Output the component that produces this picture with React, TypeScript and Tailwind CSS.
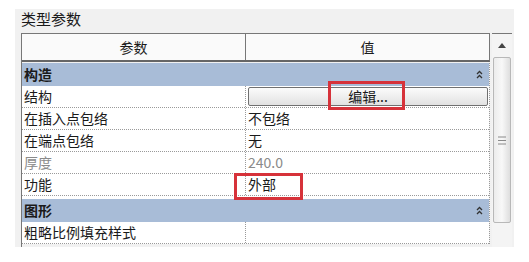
import React from "react";

const font = { fontFamily: '"Noto Sans CJK SC", "Noto Sans", sans-serif' };

function DoubleUp() {
  return (
    <svg width="7" height="9" viewBox="0 0 7 9" className="text-[#333]">
      <path d="M1 4 L3.5 1.5 L6 4" stroke="currentColor" strokeWidth="1.3" fill="none" />
      <path d="M1 8 L3.5 5.5 L6 8" stroke="currentColor" strokeWidth="1.3" fill="none" />
    </svg>
  );
}

function GroupRow({ label }: { label: string }) {
  return (
    <div className="flex h-[23px] items-center justify-between bg-[#a8bcd7] pl-[2px] pr-[6px]">
      <span className="text-[14px] font-bold text-[#1a1a1a]">{label}</span>
      <DoubleUp />
    </div>
  );
}

function Row({ label, value, gray, children }: { label: string; value?: string; gray?: boolean; children?: React.ReactNode }) {
  return (
    <div className="flex h-[22px] border-b border-dotted border-[#9a9a9a] bg-white">
      <div className={`flex w-[224px] items-center border-r border-dotted border-[#9a9a9a] pl-[2px] text-[14px] ${gray ? "text-[#8a8a8a]" : "text-[#1a1a1a]"}`}>
        {label}
      </div>
      <div className={`flex flex-1 items-center pl-[2px] text-[14px] ${gray ? "text-[#8a8a8a]" : "text-[#1a1a1a]"}`}>
        {children ?? value}
      </div>
    </div>
  );
}

export default function App() {
  return (
    <div className="relative h-[262px] w-[529px] overflow-hidden bg-white" style={font}>
      <div className="ml-[15px] mt-[9px] flex h-[238px] w-[499px] flex-col bg-[#f1f1f1] pl-[6px]">
        <div className="flex h-[24px] items-start text-[15px] leading-[20px] text-[#1a1a1a]">类型参数</div>
        <div className="flex flex-1 gap-[2px]">
          <div className="flex w-[469px] flex-col border-l border-[#777]">
            <div className="flex h-[29px] border-y border-r border-[#777] border-b-[2px] border-b-[#666] bg-[#fafafa]">
              <div className="flex w-[224px] items-center justify-center border-r border-[#777] text-[14px] text-[#1a1a1a]">参数</div>
              <div className="flex flex-1 items-center justify-center text-[14px] text-[#1a1a1a]">值</div>
            </div>
            <div className="mt-[1px] border-r border-dotted border-[#9a9a9a]">
              <GroupRow label="构造" />
              <Row label="结构">
                <div className="flex h-[19px] w-[240px] items-center justify-center rounded-[2px] border border-[#707070] bg-gradient-to-b from-[#fbfbfb] to-[#e2e2e2] text-[14px] text-[#1a1a1a]">
                  编辑...
                </div>
              </Row>
              <Row label="在插入点包络" value="不包络" />
              <Row label="在端点包络" value="无" />
              <Row label="厚度" value="240.0" gray />
              <Row label="功能" value="外部" />
              <div className="h-[3px] bg-white" />
              <GroupRow label="图形" />
              <Row label="粗略比例填充样式" value="" />
            </div>
          </div>
          <div className="flex w-[20px] flex-col bg-[#f4f4f4]">
            <div className="flex h-[23px] items-center justify-center border-t border-[#777]">
              <svg width="8" height="5" viewBox="0 0 8 5">
                <path d="M0 5 L4 0 L8 5 Z" fill="#444" />
              </svg>
            </div>
            <div className="mx-[1px] mt-[1px] flex h-[166px] items-center justify-center rounded-[2px] border border-[#b8b8b8] bg-gradient-to-r from-[#ececec] via-[#f8f8f8] to-[#dedede]">
              <svg width="8" height="9" viewBox="0 0 8 9">
                <path d="M0 1 H8 M0 4.5 H8 M0 8 H8" stroke="#8a8a8a" strokeWidth="1" />
              </svg>
            </div>
          </div>
        </div>
      </div>
      <div className="absolute left-[328px] top-[81px] h-[29px] w-[77px] border-[3px] border-[#d6323a]" />
      <div className="absolute left-[234px] top-[173px] h-[27px] w-[69px] border-[3px] border-[#d6323a]" />
    </div>
  );
}
